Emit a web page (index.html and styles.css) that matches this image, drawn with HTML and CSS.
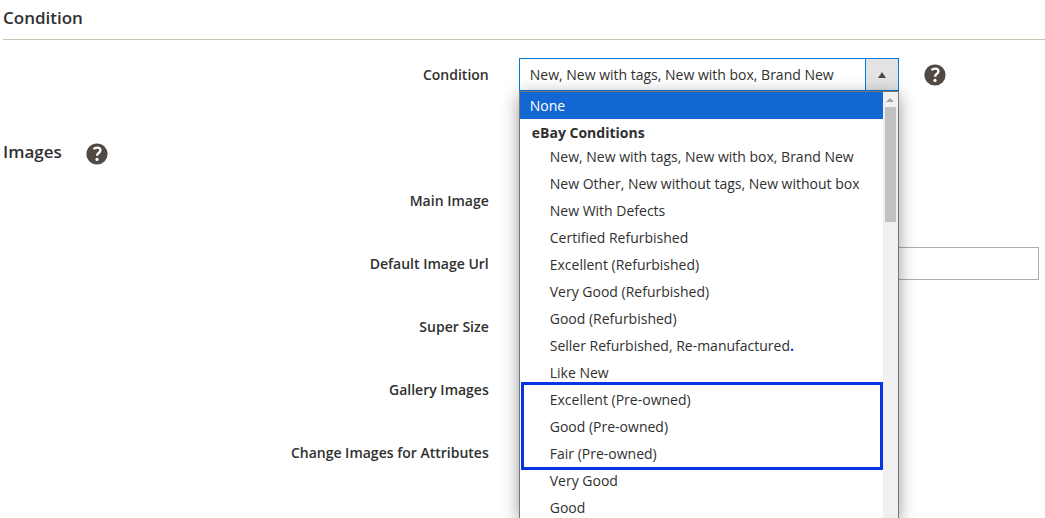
FILE: index.html
```html
<!DOCTYPE html>
<html lang="en">
<head>
  <meta charset="UTF-8" />
  <meta name="viewport" content="width=device-width, initial-scale=1.0" />
  <title>Condition</title>
  <link rel="stylesheet" href="styles.css">
</head>
<body>

  <form>
    <section class="section">
      <h2 class="section-title ruled">Condition</h2>

      <div class="fields condition-fields">
        <div class="field">
          <label for="condition">Condition</label>
          <div class="control">
            <div class="dropdown">
              <div class="select-box">
                <select id="condition">
                  <option>New, New with tags, New with box, Brand New</option>
                </select>
                <span class="select-arrow"></span>
              </div>

              <div class="menu">
                <ul class="options" role="listbox" aria-label="Condition">
                  <li class="option top active" role="option" aria-selected="true">None</li>
                  <li class="group-label" role="presentation">eBay Conditions</li>
                  <li class="option" role="option">New, New with tags, New with box, Brand New</li>
                  <li class="option" role="option">New Other, New without tags, New without box</li>
                  <li class="option" role="option">New With Defects</li>
                  <li class="option" role="option">Certified Refurbished</li>
                  <li class="option" role="option">Excellent (Refurbished)</li>
                  <li class="option" role="option">Very Good (Refurbished)</li>
                  <li class="option" role="option">Good (Refurbished)</li>
                  <li class="option" role="option">Seller Refurbished, Re-manufactured<span class="dot">.</span></li>
                  <li class="option" role="option">Like New</li>
                  <li role="presentation">
                    <ul class="marked" role="group">
                      <li class="option" role="option">Excellent (Pre-owned)</li>
                      <li class="option" role="option">Good (Pre-owned)</li>
                      <li class="option" role="option">Fair (Pre-owned)</li>
                    </ul>
                  </li>
                  <li class="option" role="option">Very Good</li>
                  <li class="option" role="option">Good</li>
                </ul>
                <div class="scrollbar" aria-hidden="true">
                  <span class="scroll-up"></span>
                  <span class="scroll-thumb"></span>
                </div>
              </div>
            </div>

            <button class="help" type="button" aria-label="Help">
              <svg viewBox="0 0 22 22" width="22" height="22">
                <circle cx="11" cy="11" r="10.6" fill="#514943" />
                <path d="M7.5 6.1C8.6 5.1 9.8 4.6 11.2 4.6c2 0 3.2 1 3.2 2.6 0 1.3-.7 2-1.8 2.8-1.1.8-1.5 1.3-1.5 2.7" fill="none" stroke="#fff" stroke-width="2.4" />
                <circle cx="11" cy="16.4" r="1.6" fill="#fff" />
              </svg>
            </button>
          </div>
        </div>
      </div>
    </section>

    <section class="section">
      <h2 class="section-title">
        Images
        <button class="help" type="button" aria-label="Help">
          <svg viewBox="0 0 22 22" width="22" height="22">
            <circle cx="11" cy="11" r="10.6" fill="#514943" />
            <path d="M7.5 6.1C8.6 5.1 9.8 4.6 11.2 4.6c2 0 3.2 1 3.2 2.6 0 1.3-.7 2-1.8 2.8-1.1.8-1.5 1.3-1.5 2.7" fill="none" stroke="#fff" stroke-width="2.4" />
            <circle cx="11" cy="16.4" r="1.6" fill="#fff" />
          </svg>
        </button>
      </h2>

      <div class="fields">
        <div class="field">
          <label for="main-image">Main Image</label>
          <div class="control"><select id="main-image" class="short"></select></div>
        </div>
        <div class="field">
          <label for="image-url">Default Image Url</label>
          <div class="control"><input type="text" id="image-url" /></div>
        </div>
        <div class="field">
          <label for="super-size">Super Size</label>
          <div class="control"><select id="super-size" class="short"></select></div>
        </div>
        <div class="field">
          <label for="gallery">Gallery Images</label>
          <div class="control"><select id="gallery" class="short"></select></div>
        </div>
        <div class="field">
          <label for="attributes">Change Images for Attributes</label>
          <div class="control"><select id="attributes" class="short"></select></div>
        </div>
      </div>
    </section>
  </form>

</body>
</html>
```

FILE: styles.css
```css
* {
  box-sizing: border-box;
}

body {
  min-height: 100vh;
  margin: 0;
  padding-left: 3px;
  background: #fff;
  color: #303030;
  font-family: 'Open Sans', 'Noto Sans', sans-serif;
  font-size: 14px;
  line-height: 20px;
}

ul {
  list-style: none;
  margin: 0;
  padding: 0;
}

.section-title {
  display: flex;
  align-items: center;
  gap: 24px;
  height: 36px;
  margin: 0;
  font-size: 17px;
  font-weight: 600;
}

.section-title .help {
  margin-top: 4px;
}

.section-title.ruled {
  height: 40px;
  padding-bottom: 3px;
  border-bottom: 1px solid #cac3b4;
}

.fields {
  display: flex;
  flex-direction: column;
  gap: 30px;
  padding-top: 14px;
}

.condition-fields {
  padding-top: 18px;
  padding-bottom: 43px;
}

.field {
  display: grid;
  grid-template-columns: minmax(0, 12fr) minmax(0, 13fr);
  column-gap: 30px;
  align-items: center;
}

.field label {
  text-align: right;
  font-weight: 600;
}

.control {
  display: flex;
  align-items: center;
  gap: 25px;
  padding-right: 6px;
}

input,
select {
  width: 100%;
  height: 33px;
  margin: 0;
  padding: 0 10px;
  border: 1px solid #adadad;
  border-radius: 0;
  background: #fff;
  color: #303030;
  font: inherit;
}

select {
  appearance: none;
}

select.short {
  width: 70%;
}

.help {
  display: flex;
  padding: 0;
  border: none;
  background: none;
  cursor: pointer;
}

/* open dropdown */
.dropdown {
  position: relative;
  flex: 0 1 380px;
}

.select-box {
  display: flex;
  border: 1px solid #007bdb;
}

.select-box select {
  flex: 1;
  height: 31px;
  border: none;
  outline: none;
}

.select-arrow {
  display: flex;
  align-items: center;
  justify-content: center;
  width: 33px;
  border-left: 1px solid #007bdb;
  background: #e3e3e3;
}

.select-arrow::before {
  content: '';
  border: 4px solid transparent;
  border-top: none;
  border-bottom: 6px solid #514943;
}

/* the list runs down to the bottom of the window */
.menu {
  position: absolute;
  top: 100%;
  left: 0;
  z-index: 10;
  display: flex;
  width: 100%;
  max-height: calc(100vh - 91px);
  overflow: hidden;
  border: 1px solid #767676;
  border-bottom: none;
  background: #fff;
  box-shadow: 0 4px 16px rgba(0, 0, 0, 0.4);
}

.options {
  flex: 1;
}

.option {
  height: 27px;
  padding-left: 30px;
  line-height: 27px;
  white-space: nowrap;
}

.option.top {
  padding-left: 10px;
}

.option.active {
  background: #1267d3;
  color: #fff;
}

.group-label {
  height: 24px;
  padding-left: 12px;
  line-height: 27px;
  font-weight: 700;
}

.dot {
  color: #0b35e6;
  font-weight: 700;
}

.marked {
  position: relative;
}

.marked::after {
  content: '';
  position: absolute;
  inset: -4px 0 -3px 1px;
  border: 3px solid #0733e3;
}

.scrollbar {
  display: flex;
  flex-direction: column;
  align-items: center;
  gap: 5px;
  width: 15px;
  padding-top: 6px;
  background: #f0f0f0;
}

.scroll-up {
  border: 4px solid transparent;
  border-top: none;
  border-bottom-color: #a3a3a3;
}

.scroll-thumb {
  width: 11px;
  height: 115px;
  background: #c1c1c1;
}
```
